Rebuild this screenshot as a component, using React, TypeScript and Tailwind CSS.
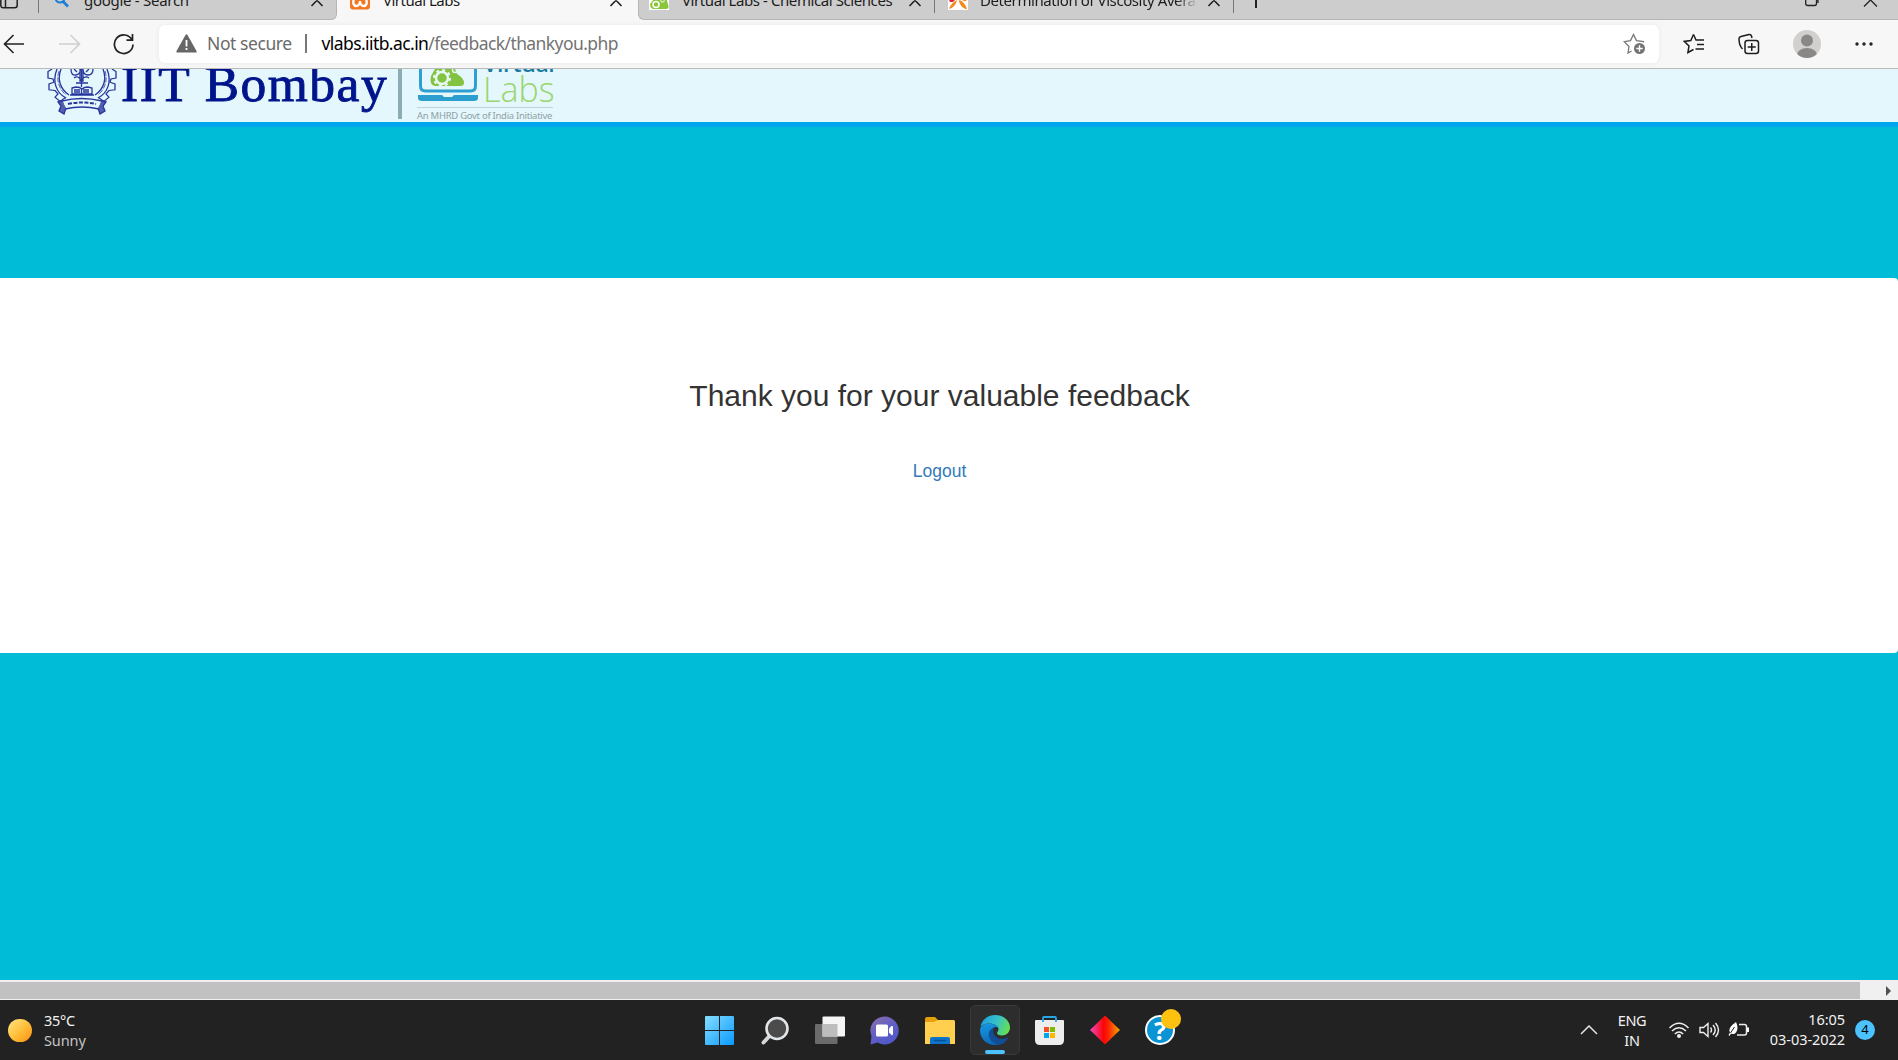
import type { ReactNode } from "react";

const CloseIcon = ({ className = "" }: { className?: string }) => (
  <svg className={`h-[14px] w-[14px] shrink-0 ${className}`} viewBox="0 0 14 14" fill="none" stroke="#1b1b1b" strokeWidth="1.5">
    <path d="M1.5 1.5 12.5 13M12.5 1.5 1.5 13" />
  </svg>
);

const TabTitle = ({ className, children }: { className: string; children: ReactNode }) => (
  <div className={`-mt-[10px] shrink-0 overflow-hidden text-[15px] leading-[20px] whitespace-nowrap text-[#1c1c1c] ${className}`}>{children}</div>
);

const TabDivider = () => <div className="h-[13px] w-px shrink-0 bg-[#777]" />;

function TabStrip() {
  return (
    <div className="flex h-[20px] overflow-hidden bg-[#f7f7f7]">
      <div className="flex w-[337px] shrink-0 rounded-br-[6px] border-r border-b border-[#b5b5b5] bg-[#cdcdcd]">
        <svg className="h-[10px] w-[38px] shrink-0" viewBox="0 0 38 10" fill="none" stroke="#222" strokeWidth="1.5">
          <path d="M.8 0v5.5a2.5 2.5 0 0 0 2.500 2.300h11.400a2.500 2.500 0 0 0 2.500-2.500V0M5.500 0v7.500" />
        </svg>
        <TabDivider />
        <svg className="ml-[15px] h-[8px] w-[16px] shrink-0" viewBox="0 0 16 8" fill="none" stroke="#1a7fd6">
          <path d="M1.500-2a4.500 4.500 0 0 0 9 0" strokeWidth="2" />
          <path d="m8.500 1 5.500 5.500" strokeWidth="2.600" />
        </svg>
        <TabTitle className="ml-[14px] w-[226px] tracking-[-0.28px]">google - Search</TabTitle>
        <CloseIcon className="-mt-[7px]" />
      </div>
      <div className="flex w-[301px] shrink-0">
        <svg className="ml-[13px] h-[10px] w-[20px] shrink-0" viewBox="0 0 20 10">
          <path d="M0-8h20V6.500a3 3 0 0 1-3 3H3a3 3 0 0 1-3-3z" fill="#f37623" />
          <path d="M5-3C1.500 3 4 6 6.500 6S10 3 10 1c0 2 1 5 3.500 5S18.500 3 15-3" fill="none" stroke="#fff" strokeWidth="2.400" />
        </svg>
        <TabTitle className="ml-[13px] w-[226px] tracking-[-0.5px]">Virtual Labs</TabTitle>
        <CloseIcon className="-mt-[7px]" />
      </div>
      <div className="flex min-w-0 flex-1 rounded-bl-[6px] border-b border-l border-[#b5b5b5] bg-[#cdcdcd]">
        <svg className="ml-[10px] h-[10px] w-[20px] shrink-0" viewBox="0 0 20 10">
          <path d="M0 0h20v10H0z" fill="#fff" />
          <path d="M5-1h12.500l2 7q.5 3-2.500 3H4Q1 8 1 4z" fill="#8bc53a" />
          <circle cx="7" cy="4.500" r="3" fill="#8bc53a" stroke="#fff" strokeWidth="1.500" />
          <circle cx="13.500" cy=".5" r="1.700" fill="#8bc53a" stroke="#fff" />
        </svg>
        <TabTitle className="ml-[13px] w-[226px] tracking-[-0.42px]">Virtual Labs - Chemical Sciences</TabTitle>
        <CloseIcon className="-mt-[7px] mr-[12px]" />
        <TabDivider />
        <svg className="ml-[13px] h-[10px] w-[20px] shrink-0" viewBox="0 0 20 10">
          <path d="M0 0h20v10H0z" fill="#fff" />
          <path d="M1 0h6L5 2H2z" fill="#e5232d" />
          <path d="M9 0C8 5 5 8 1 9c1-4 4-7 8-9M11 0c4 1 7 5 8 9.500C14 8 11 4 11 0M14 0h5c-1 1.500-3 1.500-5 0" fill="#f58a1f" />
        </svg>
        <div className="ml-[12px] flex w-[227px] shrink-0">
          <TabTitle className="w-[217px] bg-linear-to-r from-[#1c1c1c] from-90% to-[#cdcdcd] bg-clip-text tracking-[-0.42px] text-transparent">
            Determination of Viscosity Average
          </TabTitle>
        </div>
        <CloseIcon className="-mt-[7px] mr-[12px]" />
        <TabDivider />
        <div className="ml-[21px] h-[8px] w-[1.500px] bg-[#222]" />
        <svg className="mr-[20px] ml-auto h-[7px] w-[73px] shrink-0" viewBox="0 0 73 7" fill="none" stroke="#222" strokeWidth="1.300">
          <path d="M.7 0v3.500Q.7 5.500 3 5.500h6.500q2 0 2-2V0M13 0v3" />
          <path d="M59 6.500 65.500 0 72 6.500" />
        </svg>
      </div>
    </div>
  );
}

const star = "M10.500 1.500 7.800 7.500 1.300 8.400 6 13 4.900 19.500 10.500 16.500";

function Toolbar() {
  return (
    <div className="flex h-[49px] items-center border-b border-[#b9b9b9] bg-[#f7f7f7] pb-px">
      <svg className="h-[22px] w-[22px] ml-[3px] shrink-0" viewBox="0 0 22 22" fill="none" stroke="#222" strokeWidth="1.600">
        <path d="M21 11H1.500M10.500 2 1.500 11l9 9" />
      </svg>
      <svg className="ml-[33px] h-[22px] w-[23px] shrink-0" viewBox="0 0 23 22" fill="none" stroke="#cfcfcf" strokeWidth="1.600">
        <path d="M1 11h20.500M12.500 2l9 9-9 9" />
      </svg>
      <svg className="ml-[31px] h-[22px] w-[23px] shrink-0" viewBox="0 0 23 22" fill="none" stroke="#222" strokeWidth="1.700">
        <path d="M20 7a9.300 9.300 0 1 0 1 4.500M20.500 1v6.200h-6" />
      </svg>
      <div className="ml-[24px] flex h-[38px] w-[1500px] shrink-0 items-center rounded-[6px] bg-white text-[17.500px] whitespace-nowrap shadow-[0_0_5px_rgba(0,0,0,0.06)]">
        <svg className="ml-[17px] h-[19px] w-[21px] shrink-0" viewBox="0 0 21 19">
          <path d="M9.500 1q1-1.500 2 0l9 16q.500 1.500-1 1.500H1.500Q0 18.500.500 17z" fill="#666" />
          <path d="M10.500 6v6.500M10.500 14v2" stroke="#fff" strokeWidth="1.800" />
        </svg>
        <div className="ml-[10px] w-[98px] shrink-0 tracking-[-0.42px] text-[#6a6a6a]">Not secure</div>
        <div className="h-[19px] w-[1.500px] shrink-0 bg-[#777]" />
        <div className="ml-[15px] tracking-[-0.58px] text-[#737373]">
          <span className="text-black">vlabs.iitb.ac.in</span>/feedback/thankyou.php
        </div>
        <svg className="mr-[13px] ml-auto h-[22px] w-[23px] shrink-0" viewBox="0 0 23 22" fill="none" stroke="#777" strokeWidth="1.300">
          <path d="M8.500 18 5 20l1-6.500L1.300 8.600l6.200-1L10.500 1.500l3 6.100 7 1v1" />
          <circle cx="16.500" cy="15.500" r="5.500" fill="#737373" stroke="none" />
          <path d="M16.500 12.300v6.400M13.300 15.500h6.400" stroke="#fff" strokeWidth="1.400" />
        </svg>
      </div>
      <svg className="ml-[24px] h-[22px] w-[22px] shrink-0" viewBox="0 0 22 22" fill="none" stroke="#1d1d1d" strokeWidth="1.500">
        <path d={star} />
        <path d="M10.500 1.500 13 7h8M14 11.500h7M12.500 16h8.500" />
      </svg>
      <svg className="ml-[33px] h-[22px] w-[22px] shrink-0" viewBox="0 0 22 22" fill="none" stroke="#1d1d1d" strokeWidth="1.500">
        <path d="M4.500 16C2.500 14 1 9 1 5.800Q1 4 3 3.500L11 1.500q2-.300 2.500 1.500l.500 2" />
        <rect x="7" y="7.500" width="13.500" height="13" rx="2.500" />
        <path d="M13.750 10v8M9.700 14h8" />
      </svg>
      <svg className="ml-[33px] h-[28px] w-[28px] shrink-0" viewBox="0 0 28 28">
        <defs>
          <clipPath id="avatar"><circle cx="14" cy="14" r="14" /></clipPath>
        </defs>
        <g clipPath="url(#avatar)">
          <path d="M0 0h28v28H0z" fill="#d2d0ce" />
          <circle cx="14" cy="10.500" r="6" fill="#8a8886" />
          <ellipse cx="14" cy="25" rx="10" ry="7" fill="#8a8886" />
        </g>
      </svg>
      <svg className="ml-[34px] h-[4px] w-[18px] shrink-0" viewBox="0 0 18 4" fill="#222">
        <circle cx="2" cy="2" r="1.700" /><circle cx="9" cy="2" r="1.700" /><circle cx="16" cy="2" r="1.700" />
      </svg>
    </div>
  );
}

const Emblem = () => (
  <svg className="ml-[47px] h-[48px] w-[70px] shrink-0" viewBox="0 0 70 48" fill="none" stroke="#27359c" strokeWidth="1.300">
    <path d="M5 0 1 3v8l5 1 1 4-5 2v7l6 1 3 4-3 4 5 5 6-5M65 0l4 3v8l-5 1-1 4 5 2v7l-6 1-3 4 3 4-5 5-6-5" transform="scale(1 .83)" />
    <path d="M10 0C5 12 9 24 19 29M14 0c-4 10-1 20 8 26M60 0c5 12 1 24-9 29M56 0c4 10 1 20-8 26" />
    <path d="M12 2c-3 9 0 18 7 24M58 2c3 9 0 18-7 24" strokeWidth=".8" strokeDasharray="5 1.500" />
    <path d="M34.500 0v18M33 0h3v12h-3zM24 0q0 7 5 6t4-6M36 0q0 6 5 6t5-6M27 0l3 3M42 0l-3 3M27 9q4-3 7 2 4-5 8-2M29 14h12" />
    <path d="m25 19 4-1q4 0 6 2 2-2 6-2l4 1v6H25zM23 26h24M34.500 20v6M27 21h6m3 0h6M27 23h6m3 0h6" />
    <path d="M15 32q19-5 40 0l-3 8q-17-4-34 0z" />
    <path d="m15 32-4 1 3 4-2 5 5 3 2-6M55 32l4 1-3 4 2 5-5 3-2-6" fill="#5360b0" />
    <path d="M21 35q14-3 28 0" strokeWidth="2" strokeDasharray="4 1.500" />
  </svg>
);

function SiteHeader() {
  return (
    <div className="flex h-[58px] overflow-hidden border-b-[5px] border-[#00a5ee] bg-[#e3f7fc]">
      <Emblem />
      <div className="-mt-[15px] ml-[4px] w-[277px] shrink-0 font-['Liberation_Serif',serif] text-[51.500px] leading-[60px] tracking-[1.500px] whitespace-nowrap text-[#00148c] [-webkit-text-stroke:0.900px_#00148c]">
        IIT Bombay
      </div>
      <div className="h-[50px] w-[4px] shrink-0 bg-[#8aadb5]" />
      <div className="ml-[15px] w-[138px] shrink-0">
        <div className="flex h-[38px]">
          <svg className="h-[38px] w-[62px] shrink-0" viewBox="0 0 62 38">
            <path d="M3.500 0v17q0 5 5 5h45q5 0 5-5V0" fill="none" stroke="#2e9fd0" strokeWidth="3" />
            <path d="M1 26h24l2 2h8l2-2h24v3q0 3-4 3H5q-4 0-4-3z" fill="#2b9dcf" />
            <path d="M18 0h20l2 5q7 4 7 9 0 3-4 3H18q-6-1-4-10z" fill="#82c341" />
            <circle cx="25" cy="9" r="6" fill="none" stroke="#e8f8f4" strokeWidth="2.500" />
            <circle cx="25" cy="9" r="8" fill="none" stroke="#e8f8f4" strokeWidth="2" strokeDasharray="3 3.280" />
            <circle cx="38" cy="1" r="2.500" fill="none" stroke="#e8f8f4" strokeWidth="1.500" />
          </svg>
          <div className="-mt-[15px] ml-[4px] font-['Open_Sans',sans-serif]">
            <div className="h-[18px] text-[23px] leading-[18px] font-semibold tracking-[-0.400px] whitespace-nowrap text-[#187aa3]">Virtual</div>
            <div className="text-[34px] leading-[34px] font-light tracking-[0px] text-[#9ad56d]">Labs</div>
          </div>
        </div>
        <div className="h-px w-[136px] bg-[#bfd5d9]" />
        <div className="text-[9.500px] leading-[15px] tracking-[-0.280px] whitespace-nowrap text-[#91a1a5]">An MHRD Govt of India Initiative</div>
      </div>
    </div>
  );
}

const trayText = "text-[14.500px] leading-[20px] text-[#f2f2f2]";

function Taskbar() {
  return (
    <div className="flex h-[60px] items-center bg-[#222222] whitespace-nowrap">
      <div className="ml-[8px] h-[23px] w-[24px] shrink-0 rounded-full bg-linear-to-br from-[#ffe680] via-[#ffc13b] to-[#ff8c00]" />
      <div className="ml-[12px] w-[661px] shrink-0">
        <div className={`${trayText} tracking-[-0.300px]`}>35°C</div>
        <div className="text-[14.500px] leading-[20px] tracking-[-0.100px] text-[#c4c4c4]">Sunny</div>
      </div>
      <svg className="h-[29px] w-[29px] shrink-0" viewBox="0 0 29 29">
        <defs>
          <linearGradient id="win" gradientUnits="userSpaceOnUse" x1="0" y1="0" x2="29" y2="29">
            <stop stopColor="#85deff" /><stop offset="1" stopColor="#0a99ff" />
          </linearGradient>
        </defs>
        <path d="M0 1q0-1 1-1h13v14H0zM15 0h13q1 0 1 1v13H15zM0 15h14v14H1q-1 0-1-1zM15 15h14v13q0 1-1 1H15z" fill="url(#win)" />
      </svg>
      <svg className="ml-[27px] h-[29px] w-[29px] shrink-0" viewBox="0 0 29 29">
        <path d="m8.500 20-6 6.500" stroke="#d4d7d9" strokeWidth="4" strokeLinecap="round" />
        <circle cx="16" cy="12.500" r="10.500" fill="#4b4b4b" stroke="#e3e6e8" strokeWidth="2.600" />
      </svg>
      <svg className="ml-[25px] h-[29px] w-[30px] shrink-0" viewBox="0 0 30 29">
        <rect y="8" width="22.500" height="20" rx="1" fill="#6b6b6b" />
        <rect x="7.500" y=".5" width="22.500" height="20" rx="1" fill="#f5f5f5" />
        <path d="M7.500 8h15v12.500h-15z" fill="#bdbdbd" />
      </svg>
      <svg className="ml-[25px] h-[29px] w-[29px] shrink-0" viewBox="0 0 29 29">
        <defs>
          <linearGradient id="chat" x1="0" y1="0" x2=".6" y2="1">
            <stop stopColor="#8f70a8" /><stop offset=".5" stopColor="#6460c5" /><stop offset="1" stopColor="#5059c9" />
          </linearGradient>
        </defs>
        <path d="M14.500.5a14 14 0 1 1-7 26L.500 28.500 1.500 20A14 14 0 0 1 14.500.500" fill="url(#chat)" />
        <rect x="6" y="8.500" width="12" height="12" rx="1.500" fill="#fff" />
        <path d="m19 12.500 2.500-2.500q1.500-.500 1.500 1v7q0 1.500-1.500 1L19 16.500z" fill="#fff" />
      </svg>
      <svg className="ml-[26px] h-[27px] w-[30px] shrink-0" viewBox="0 0 30 27">
        <path d="M0 2q0-2 2-2h8l3 3h15q2 0 2 2v8H0z" fill="#e3a008" />
        <path d="M0 5h9l4-2h15q2 0 2 2v22H0z" fill="#ffd04f" />
        <path d="M5 27v-5q0-2 2-2h16q2 0 2 2v5z" fill="#0d74cc" />
        <path d="M9 23.500h12" stroke="#08508f" strokeWidth="1.500" />
      </svg>
      <div className="ml-[15px] flex h-[50px] w-[50px] shrink-0 flex-col items-center rounded-[5px] border border-[#393939] bg-[#2d2d2d] pt-[9px]">
        <svg className="h-[30px] w-[30px] shrink-0" viewBox="0 0 30 30">
          <defs>
            <linearGradient id="edgeTop" x1="0" y1=".3" x2="1" y2=".6">
              <stop stopColor="#1e9fe0" /><stop offset=".5" stopColor="#35c1c9" /><stop offset="1" stopColor="#68e04f" />
            </linearGradient>
            <linearGradient id="edgeLeft" x1=".3" y1="0" x2=".6" y2="1">
              <stop stopColor="#1596e0" /><stop offset="1" stopColor="#0c66b4" />
            </linearGradient>
          </defs>
          <path d="M.5 12C1.500 5 7.500 0 15 0c9 0 15 6 15 12.500 0 5-4 8-8 8-3 0-5-1-5-2.500 0-1 1.500-1.500 1.500-4C18.500 11 14 8.500 9 8.500 5 8.500 2 10 .5 12" fill="url(#edgeTop)" />
          <path d="M18.500 14C18.500 11 14 8.500 9 8.500 3 8.500 0 12 0 15c0 9 7 15 15 15 5 0 8-1.500 10-3-7 1-14-3-14-9 0-4 3-6 5-6 1.500 0 2.500 1 2.500 2" fill="url(#edgeLeft)" />
          <path d="M14 12.500c-4 1.500-6 5-5 9 1 4 5 7.500 9 8 4-.3 8-3 10-6 .5-.800 0-1.200-.8-.8-6 3-12 .3-13.500-4-.8-2.200-.5-4.500.3-6.200" fill="#124d97" />
        </svg>
        <div className="mt-[5px] h-[4px] w-[20px] shrink-0 rounded-full bg-[#4cc2ff]" />
      </div>
      <svg className="ml-[15px] h-[29px] w-[29px] shrink-0" viewBox="0 0 29 29">
        <path d="M0 5q0-1 1-1h27q1 0 1 1v19q0 5-5 5H5q-5 0-5-5z" fill="#ededed" />
        <path d="M8 6V2q0-1 1-1h11q1 0 1 1v4" fill="none" stroke="#27a7e7" strokeWidth="1.800" />
        <path d="M9 11h5v5H9z" fill="#f25022" /><path d="M15 11h5v5h-5z" fill="#7fba00" />
        <path d="M9 17h5v5H9z" fill="#00a4ef" /><path d="M15 17h5v5h-5z" fill="#ffb900" />
      </svg>
      <svg className="ml-[26px] h-[30px] w-[30px] shrink-0" viewBox="0 0 30 30">
        <defs>
          <linearGradient id="gem"><stop stopColor="#f048c8" /><stop offset=".45" stopColor="#fb0505" /><stop offset=".6" stopColor="#fb2000" /><stop offset="1" stopColor="#f5a800" /></linearGradient>
        </defs>
        <path d="M15 .5 30 15 15 29.500 0 15z" fill="url(#gem)" />
      </svg>
      <div className="relative ml-[25px] flex h-[30px] w-[30px] shrink-0 items-center justify-center rounded-full border-2 border-white bg-[#0a94d6] text-[25px] leading-none font-bold text-white">
        ?
        <div className="absolute -top-[8px] -right-[8px] h-[20px] w-[20px] rounded-full bg-[#ffc10f]" />
      </div>
      <svg className="ml-[405px] h-[10px] w-[18px] shrink-0" viewBox="0 0 18 10" fill="none" stroke="#e5e5e5" strokeWidth="1.500">
        <path d="M1 9 9 1l8 8" />
      </svg>
      <div className={`ml-[17px] w-[34px] shrink-0 text-center tracking-[-0.300px] ${trayText}`}>
        <div>ENG</div>
        <div>IN</div>
      </div>
      <svg className="ml-[19px] h-[16px] w-[22px] shrink-0" viewBox="0 0 22 16" fill="none" stroke="#eee" strokeWidth="1.500">
        <path d="M1.500 6Q11-3.500 20.500 6M4 9q7-6.500 14 0M6.800 12q4.200-4 8.400 0" />
        <circle cx="11" cy="14" r="2" fill="#eee" stroke="none" />
      </svg>
      <svg className="ml-[9px] h-[18px] w-[21px] shrink-0" viewBox="0 0 21 18" fill="none" stroke="#eee" strokeWidth="1.400">
        <path d="M1 6.500h3.500L9 2.500v13l-4.500-4H1zM11.500 6.500q2 2.500 0 5M14 4q4.500 5 0 10M16.500 2q6 7 0 14" />
      </svg>
      <svg className="ml-[8px] h-[18px] w-[22px] shrink-0" viewBox="0 0 22 18">
        <path d="M11 3.500h5.500q2 0 2 2V12q0 2-2 2H9" fill="none" stroke="#eee" strokeWidth="1.500" />
        <path d="M19 6.500h2v4.500h-2zM8 1c2 4 2 8 0 10.500q-2 2.500-5 1L1.500 15 .500 14 2 11.500C0 7 4 4 8 1" fill="#fff" />
        <path d="m2.500 12 4-6" stroke="#222" />
      </svg>
      <div className={`ml-[15px] w-[80px] shrink-0 -mt-[3px] text-right tracking-[-0.050px] ${trayText}`}>
        <div>16:05</div>
        <div>03-03-2022</div>
      </div>
      <div className="ml-[10px] flex h-[20px] w-[20px] shrink-0 items-center justify-center rounded-full bg-[#4cc2ff] text-[13px] text-black">4</div>
    </div>
  );
}

export default function App() {
  return (
    <div className="flex h-[1060px] w-[1898px] flex-col overflow-hidden bg-[#00bcd7] font-['Noto_Sans',sans-serif]">
      <TabStrip />
      <Toolbar />
      <SiteHeader />
      <main className="flex-1 pt-[151px] font-['Liberation_Sans',Arial,sans-serif]">
        <div className="flex h-[375px] flex-col items-center rounded-r-[4px] bg-white pt-[100px] pr-[19px]">
          <h1 className="text-[30px] leading-[36px] whitespace-nowrap text-[#333]">Thank you for your valuable feedback</h1>
          <a className="mt-[44px] text-[17.500px] leading-[26px] text-[#337ab7]" href="#">Logout</a>
        </div>
      </main>
      <div className="flex h-[20px] items-center border-t-2 border-b border-[#f0f0f0] bg-[#f0f0f0]">
        <div className="h-[17px] w-[1860px] bg-[#c1c1c1]" />
        <div className="ml-[26px] h-0 w-0 border-y-[5px] border-l-[5px] border-y-transparent border-l-[#505050]" />
      </div>
      <Taskbar />
    </div>
  );
}
